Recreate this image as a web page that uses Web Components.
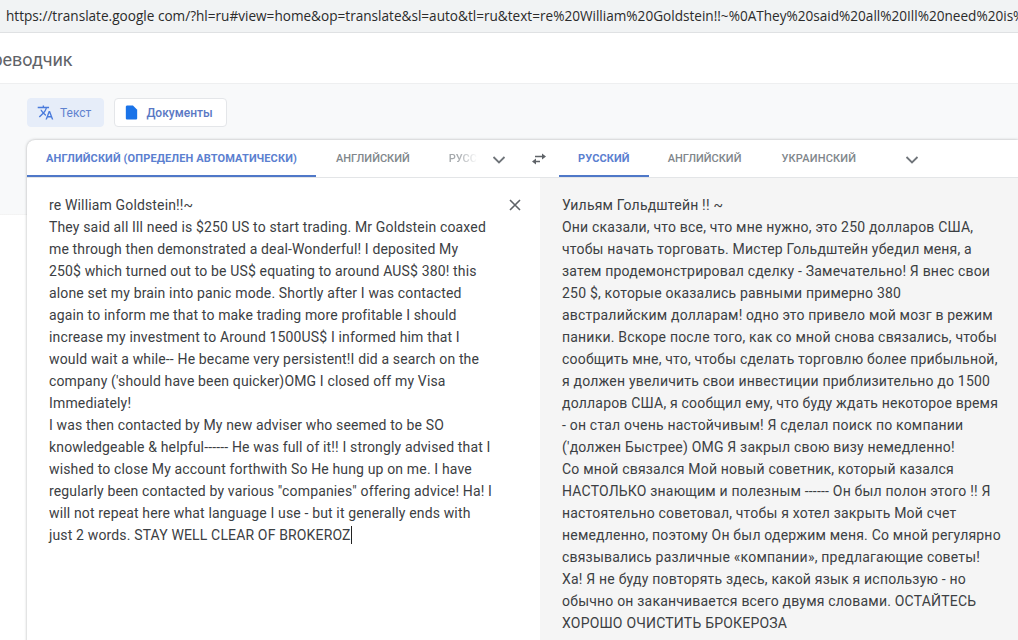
<!DOCTYPE html>
<html>
<head>
<meta charset="utf-8">
<style>
  html, body { margin: 0; height: 100%; overflow: hidden; background: #fff; }
  body { font-family: Roboto, "Liberation Sans", sans-serif; }
</style>
</head>
<body>
<translate-page>
  <url-bar slot="url">https://translate.google com/?hl=ru#view=home&amp;op=translate&amp;sl=auto&amp;tl=ru&amp;text=re%20William%20Goldstein!!~%0AThey%20said%20all%20Ill%20need%20is%20$250%20US%20to%20start</url-bar>
  <mode-button slot="modes" active icon="translate">Текст</mode-button>
  <mode-button slot="modes" icon="doc">Документы</mode-button>
  <translate-card slot="card">
    <lang-tab slot="source" active>Английский (определен автоматически)</lang-tab>
    <lang-tab slot="source">Английский</lang-tab>
    <lang-tab slot="source" faded>Русс</lang-tab>
    <lang-tab slot="target" active>Русский</lang-tab>
    <lang-tab slot="target">Английский</lang-tab>
    <lang-tab slot="target" style="margin-left: 2px; letter-spacing: .2px">Украинский</lang-tab>
    <div slot="input">re William Goldstein!!~<br>They said all Ill need is $250 US to start trading. Mr Goldstein coaxed<br>me through then demonstrated a deal-Wonderful! I deposited My<br>250$ which turned out to be US$ equating to around AUS$ 380! this<br>alone set my brain into panic mode. Shortly after I was contacted<br>again to inform me that to make trading more profitable I should<br>increase my investment to Around 1500US$ I informed him that I<br>would wait a while-- He became very persistent!I did a search on the<br>company ('should have been quicker)OMG I closed off my Visa<br>Immediately!<br>I was then contacted by My new adviser who seemed to be SO<br>knowledgeable &amp; helpful------ He was full of it!! I strongly advised that I<br>wished to close My account forthwith So He hung up on me. I have<br>regularly been contacted by various "companies" offering advice! Ha! I<br>will not repeat here what language I use - but it generally ends with<br>just 2 words. STAY WELL CLEAR OF BROKEROZ<text-caret></text-caret></div>
    <div slot="output">Уильям Гольдштейн !! ~<br>Они сказали, что все, что мне нужно, это 250 долларов США,<br>чтобы начать торговать. Мистер Гольдштейн убедил меня, а<br>затем продемонстрировал сделку - Замечательно! Я внес свои<br>250 $, которые оказались равными примерно 380<br>австралийским долларам! одно это привело мой мозг в режим<br>паники. Вскоре после того, как со мной снова связались, чтобы<br>сообщить мне, что, чтобы сделать торговлю более прибыльной,<br>я должен увеличить свои инвестиции приблизительно до 1500<br>долларов США, я сообщил ему, что буду ждать некоторое время<br>- он стал очень настойчивым! Я сделал поиск по компании<br>('должен Быстрее) OMG Я закрыл свою визу немедленно!<br>Со мной связался Мой новый советник, который казался<br>НАСТОЛЬКО знающим и полезным ------ Он был полон этого !! Я<br>настоятельно советовал, чтобы я хотел закрыть Мой счет<br>немедленно, поэтому Он был одержим меня. Со мной регулярно<br>связывались различные «компании», предлагающие советы!<br>Ха! Я не буду повторять здесь, какой язык я использую - но<br>обычно он заканчивается всего двумя словами. ОСТАЙТЕСЬ<br>ХОРОШО ОЧИСТИТЬ БРОКЕРОЗА</div>
  </translate-card>
</translate-page>
<script>
class TranslatePage extends HTMLElement {
  constructor() {
    super().attachShadow({mode: "open"}).innerHTML = `
      <style>
        :host { display: flex; flex-direction: column; height: 640px; overflow: hidden; }
        .head {
          height: 52px;
          flex: none;
          display: flex;
          align-items: center;
          overflow: hidden;
          border-top: 1px solid #dfe1e3;
          box-sizing: border-box;
          border-bottom: 1px solid #eeeff0;
          color: #5f6368;
          font-size: 18px;
          padding-top: 2px;
        }
        .title { margin-left: -30px; white-space: nowrap; }
        .main {
          flex: 1;
          background: linear-gradient(#f8f9fa 130px, #e8e8e8 130px, #fff 131px);
          padding: 14px 0 0 27px;
          min-height: 0;
        }
        .modes { display: flex; gap: 10px; height: 29px; margin-bottom: 13px; }
      </style>
      <slot name="url"></slot>
      <div class="head"><div class="title">Переводчик</div></div>
      <div class="main">
        <div class="modes"><slot name="modes"></slot></div>
        <slot name="card"></slot>
      </div>
    `;
  }
}

class UrlBar extends HTMLElement {
  constructor() {
    super().attachShadow({mode: "open"}).innerHTML = `
      <style>
        :host {
          display: block;
          height: 32px;
          flex: none;
          background: #f1f3f4;
          color: #2b2b2b;
          font: 13.6px/31px "Open Sans", "Liberation Sans", sans-serif;
          padding-left: 6px;
          white-space: nowrap;
          overflow: hidden;
        }
      </style>
      <slot></slot>
    `;
  }
}

class ModeButton extends HTMLElement {
  constructor() {
    super().attachShadow({mode: "open"}).innerHTML = `
      <style>
        :host {
          display: flex;
          align-items: center;
          gap: 6px;
          box-sizing: border-box;
          height: 29px;
          padding: 0 13px 0 8px;
          border: 1px solid #e4e6e9;
          border-radius: 4px;
          background: #fff;
          color: #5a78c4;
          font-size: 12px;
          font-weight: 500;
        }
        :host([active]) {
          background: #e6edf9;
          border-color: #e6edf9;
          color: #5f82cf;
          padding: 0 12px 0 9px;
          font-weight: 400;
        }
        svg { width: 17px; height: 17px; fill: #4a7bdc; flex: none; }
        :host(:not([active])) svg { fill: #1a73e8; }
      </style>
      <svg viewBox="0 0 24 24"></svg><slot></slot>
    `;
    const paths = {
      translate: "M12.87 15.07l-2.54-2.51.03-.03A17.52 17.52 0 0 0 14.07 6H17V4h-7V2H8v2H1v2h11.17C11.5 7.92 10.44 9.75 9 11.35 8.07 10.32 7.3 9.19 6.69 8h-2c.73 1.63 1.73 3.17 2.98 4.56l-5.09 5.02L4 19l5-5 3.11 3.11.76-2.04zM18.5 10h-2L12 22h2l1.12-3h4.75L21 22h2l-4.500-12zm-2.620 7l1.620-4.330L19.120 17h-3.240z",
      doc: "M14 2H6c-1.100 0-2 .9-2 2v16c0 1.100.9 2 2 2h12c1.100 0 2-.9 2-2V8l-6-6z"
    };
    this.shadowRoot.querySelector("svg").innerHTML = `<path d="${paths[this.getAttribute("icon")]}"/>`;
  }
}

class LangTab extends HTMLElement {
  constructor() {
    super().attachShadow({mode: "open"}).innerHTML = `
      <style>
        :host {
          display: block;
          box-sizing: border-box;
          height: 37px;
          padding: 0 19px;
          line-height: 37px;
          white-space: nowrap;
          text-transform: uppercase;
          font-size: 11px;
          font-weight: 500;
          color: #80868b;
          border-bottom: 2px solid transparent;
        }
        :host([active]) {
          color: #5b80d0;
          border-bottom-color: #4f78c8;
          font-weight: 700;
          letter-spacing: .12px;
        }
        :host([faded]) {
          width: 50px;
          padding-right: 0;
          color: #a4a8ac;
          -webkit-mask-image: linear-gradient(to right, #000 55%, transparent 95%);
        }
      </style>
      <slot></slot>
    `;
  }
}

class TextCaret extends HTMLElement {
  constructor() {
    super().attachShadow({mode: "open"}).innerHTML = `
      <style>
        :host {
          display: inline-block;
          width: 1px;
          height: 18px;
          background: #222;
          vertical-align: -4px;
        }
      </style>
    `;
  }
}

class TranslateCard extends HTMLElement {
  constructor() {
    super().attachShadow({mode: "open"}).innerHTML = `
      <style>
        :host {
          display: block;
          height: 520px;
          background: #fff;
          border-radius: 8px 0 0 0;
          box-shadow: 0 0 3px rgba(60,64,67,.4);
          overflow: hidden;
        }
        .tabs { display: flex; height: 38px; border-bottom: 1px solid #e3e5e7; box-sizing: border-box; }
        .side { display: flex; }
        .src { width: 492px; flex: none; gap: 1px; }
        .chev { width: 14px; height: 37px; flex: none; }
        .src .chev { margin-left: 11px; }
        .tgt .chev { margin-left: 30px; }
        .swap { width: 40px; height: 37px; flex: none; }
        .panes { display: grid; grid-template-columns: 513px 1fr; height: 100%; }
        .in, .out {
          font-size: 14px;
          line-height: 22px;
          color: #3c4043;
          white-space: nowrap;
          overflow: hidden;
        }
        .in { position: relative; padding: 16px 0 0 22px; letter-spacing: .15px; }
        .out { background: #f5f5f5; padding: 16px 0 0 22px; letter-spacing: .2px; }
        .close { position: absolute; top: 20px; right: 18px; width: 14px; height: 14px; }
      </style>
      <div class="tabs">
        <div class="side src"><slot name="source"></slot>
          <svg class="chev" viewBox="0 0 14 37"><path d="M1.500 17l5.500 5.500 5.500-5.500" fill="none" stroke="#70757a" stroke-width="1.800"/></svg>
        </div>
        <svg class="swap" viewBox="0 0 40 37">
          <path d="M16 16.500h7M21 21.500h-4" stroke="#5f6368" stroke-width="1.600" fill="none"/>
          <path d="M23 13.500l4 3-4 3zM17 18.500l-4 3 4 3z" fill="#5f6368"/>
        </svg>
        <div class="side tgt"><slot name="target"></slot>
          <svg class="chev" viewBox="0 0 14 37"><path d="M1.500 17l5.500 5.500 5.500-5.500" fill="none" stroke="#70757a" stroke-width="1.800"/></svg>
        </div>
      </div>
      <div class="panes">
        <div class="in"><slot name="input"></slot>
          <svg class="close" viewBox="0 0 14 14"><path d="M2 2l10 10M12 2L2 12" stroke="#5f6368" stroke-width="1.600"/></svg>
        </div>
        <div class="out"><slot name="output"></slot></div>
      </div>
    `;
  }
}

customElements.define("translate-page", TranslatePage);
customElements.define("url-bar", UrlBar);
customElements.define("mode-button", ModeButton);
customElements.define("lang-tab", LangTab);
customElements.define("text-caret", TextCaret);
customElements.define("translate-card", TranslateCard);
</script>
</body>
</html>
